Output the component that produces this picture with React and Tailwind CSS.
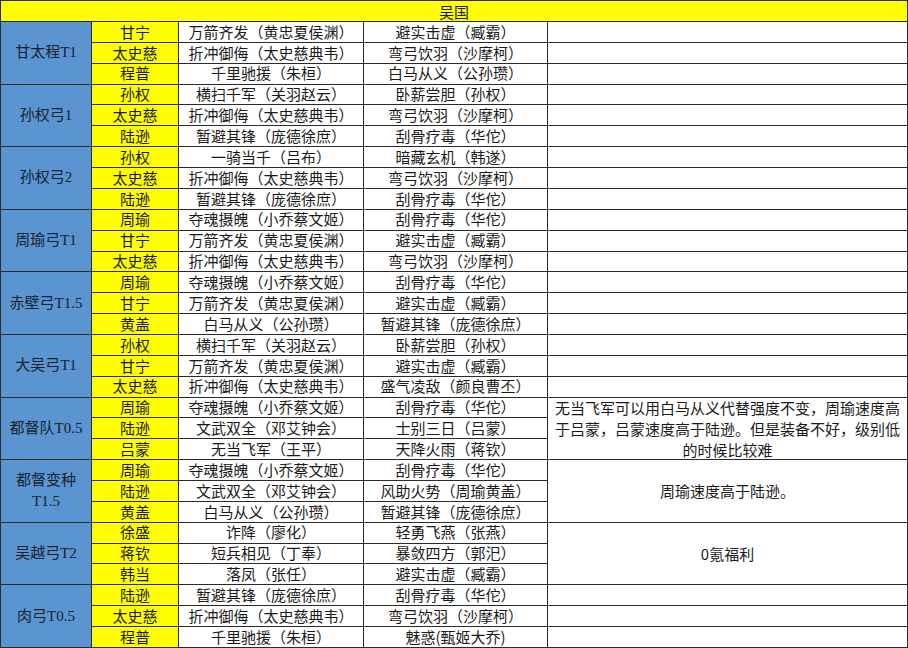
import React from "react";

const groups = [
  {
    name: "甘太程T1",
    rows: [
      ["甘宁", "万箭齐发（黄忠夏侯渊）", "避实击虚（臧霸）"],
      ["太史慈", "折冲御侮（太史慈典韦）", "弯弓饮羽（沙摩柯）"],
      ["程普", "千里驰援（朱桓）", "白马从义（公孙瓒）"],
    ],
  },
  {
    name: "孙权弓1",
    rows: [
      ["孙权", "横扫千军（关羽赵云）", "卧薪尝胆（孙权）"],
      ["太史慈", "折冲御侮（太史慈典韦）", "弯弓饮羽（沙摩柯）"],
      ["陆逊", "暂避其锋（庞德徐庶）", "刮骨疗毒（华佗）"],
    ],
  },
  {
    name: "孙权弓2",
    rows: [
      ["孙权", "一骑当千（吕布）", "暗藏玄机（韩遂）"],
      ["太史慈", "折冲御侮（太史慈典韦）", "弯弓饮羽（沙摩柯）"],
      ["陆逊", "暂避其锋（庞德徐庶）", "刮骨疗毒（华佗）"],
    ],
  },
  {
    name: "周瑜弓T1",
    rows: [
      ["周瑜", "夺魂摄魄（小乔蔡文姬）", "刮骨疗毒（华佗）"],
      ["甘宁", "万箭齐发（黄忠夏侯渊）", "避实击虚（臧霸）"],
      ["太史慈", "折冲御侮（太史慈典韦）", "弯弓饮羽（沙摩柯）"],
    ],
  },
  {
    name: "赤壁弓T1.5",
    rows: [
      ["周瑜", "夺魂摄魄（小乔蔡文姬）", "刮骨疗毒（华佗）"],
      ["甘宁", "万箭齐发（黄忠夏侯渊）", "避实击虚（臧霸）"],
      ["黄盖", "白马从义（公孙瓒）", "暂避其锋（庞德徐庶）"],
    ],
  },
  {
    name: "大吴弓T1",
    rows: [
      ["孙权", "横扫千军（关羽赵云）", "卧薪尝胆（孙权）"],
      ["甘宁", "万箭齐发（黄忠夏侯渊）", "避实击虚（臧霸）"],
      ["太史慈", "折冲御侮（太史慈典韦）", "盛气凌敌（颜良曹丕）"],
    ],
  },
  {
    name: "都督队T0.5",
    rows: [
      ["周瑜", "夺魂摄魄（小乔蔡文姬）", "刮骨疗毒（华佗）"],
      ["陆逊", "文武双全（邓艾钟会）", "士别三日（吕蒙）"],
      ["吕蒙", "无当飞军（王平）", "天降火雨（蒋钦）"],
    ],
    note: "无当飞军可以用白马从义代替强度不变，周瑜速度高于吕蒙，吕蒙速度高于陆逊。但是装备不好，级别低的时候比较难",
  },
  {
    name: (
      <>
        都督变种
        <br />
        T1.5
      </>
    ),
    rows: [
      ["周瑜", "夺魂摄魄（小乔蔡文姬）", "刮骨疗毒（华佗）"],
      ["陆逊", "文武双全（邓艾钟会）", "风助火势（周瑜黄盖）"],
      ["黄盖", "白马从义（公孙瓒）", "暂避其锋（庞德徐庶）"],
    ],
    note: "周瑜速度高于陆逊。",
  },
  {
    name: "吴越弓T2",
    rows: [
      ["徐盛", "诈降（廖化）", "轻勇飞燕（张燕）"],
      ["蒋钦", "短兵相见（丁奉）", "暴敛四方（郭汜）"],
      ["韩当", "落凤（张任）", "避实击虚（臧霸）"],
    ],
    note: "0氪福利",
  },
  {
    name: "肉弓T0.5",
    rows: [
      ["陆逊", "暂避其锋（庞德徐庶）", "刮骨疗毒（华佗）"],
      ["太史慈", "折冲御侮（太史慈典韦）", "弯弓饮羽（沙摩柯）"],
      ["程普", "千里驰援（朱桓）", "魅惑(甄姬大乔)"],
    ],
  },
];

function Group({ g }) {
  return (
    <div className="flex flex-1 min-h-0">
      <div
        className="w-[91px] shrink-0 bg-[#5a95d2] border-b border-r border-[#2a2a2a] flex items-center justify-center text-center text-[#16222e] leading-[21px]"
        style={{ fontFamily: '"Liberation Serif", "Noto Sans CJK SC", serif' }}
      >
        <div>{g.name}</div>
      </div>
      <div className="w-[456px] shrink-0 flex flex-col">
        {g.rows.map((r, i) => (
          <div key={i} className="flex flex-1 min-h-0">
            <div className="w-[87px] shrink-0 bg-[#ffff00] border-b border-r border-[#2a2a2a] flex items-center justify-center whitespace-nowrap">
              {r[0]}
            </div>
            <div className="w-[185px] shrink-0 bg-white border-b border-r border-[#2a2a2a] flex items-center justify-center whitespace-nowrap">
              {r[1]}
            </div>
            <div className="w-[184px] shrink-0 bg-white border-b border-r border-[#2a2a2a] flex items-center justify-center whitespace-nowrap">
              {r[2]}
            </div>
          </div>
        ))}
      </div>
      {g.note ? (
        <div className="flex-1 bg-white border-b border-r border-[#2a2a2a] flex items-center justify-center text-center px-[5px] leading-[21px] text-[#1a1a1a]">
          <div>{g.note}</div>
        </div>
      ) : (
        <div className="flex-1 flex flex-col">
          {g.rows.map((r, i) => (
            <div key={i} className="flex-1 min-h-0 bg-white border-b border-r border-[#2a2a2a]" />
          ))}
        </div>
      )}
    </div>
  );
}

export default function App() {
  return (
    <div
      className="w-[908px] h-[648px] bg-white overflow-hidden flex flex-col border-l border-[#2a2a2a] text-[15px] text-[#1a1a1a]"
      style={{ fontFamily: '"Noto Sans CJK SC", "Noto Sans", sans-serif' }}
    >
      <div className="h-[22px] shrink-0 bg-[#ffff00] border-t border-b border-r border-[#2a2a2a] flex items-center justify-center leading-none">
        吴国
      </div>
      {groups.map((g, i) => (
        <Group key={i} g={g} />
      ))}
    </div>
  );
}
